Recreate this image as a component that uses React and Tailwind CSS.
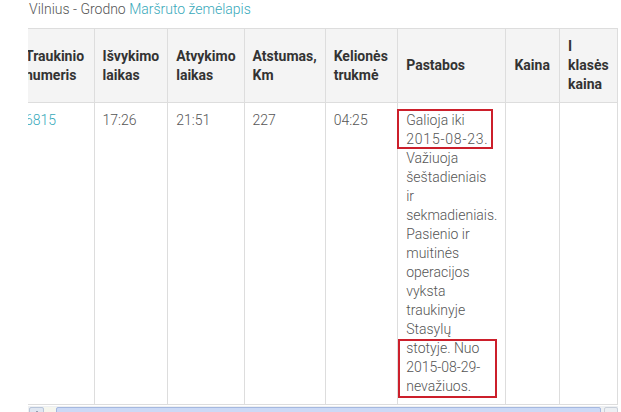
const headers = [
  { label: ['Traukinio', 'numeris'], w: 'w-[78px]' },
  { label: ['Išvykimo', 'laikas'], w: 'w-[73px]' },
  { label: ['Atvykimo', 'laikas'], w: 'w-[76px]' },
  { label: ['Atstumas,', 'Km'], w: 'w-[81px]' },
  { label: ['Kelionės', 'trukmė'], w: 'w-[73px]' },
  { label: ['Pastabos'], w: 'w-[108px]' },
  { label: ['Kaina'], w: 'w-[54px]' },
  { label: ['I', 'klasės', 'kaina'], w: 'w-[58px]' },
];

const notes = [
  'Galioja iki',
  '2015-08-23.',
  'Važiuoja',
  'šeštadieniais',
  'ir',
  'sekmadieniais.',
  'Pasienio ir',
  'muitinės',
  'operacijos',
  'vyksta',
  'traukinyje',
  'Stasylų',
  'stotyje. Nuo',
  '2015-08-29-',
  'nevažiuos.',
];

function Lines({ lines }) {
  return lines.map((l, i) => (
    <span key={i} className={`block whitespace-nowrap ${l === '2015-08-23.' ? 'tracking-[0.8px]' : ''}`}>
      {l}
    </span>
  ));
}

export default function App() {
  return (
    <div className="h-[412px] w-[621px] overflow-hidden bg-white font-['Roboto',sans-serif] text-[14px] leading-[19px] text-[#555]">
      <div className="h-[19px] pl-[29px] font-light">
        Vilnius - Grodno <a className="text-[#38a9ba]">Maršruto žemėlapis</a>
      </div>

      <div className="ml-[28px] mt-[9px] w-[590px] overflow-hidden">
        <table className="-ml-[12px] table-fixed border-collapse">
          <thead>
            <tr className="bg-[#f4f4f4]">
              {headers.map((h, i) => (
                <th
                  key={i}
                  className={`${h.w} border border-[#dddddd] px-[8px] py-[8px] text-left align-middle font-bold text-[#333]`}
                >
                  <Lines lines={h.label} />
                </th>
              ))}
            </tr>
          </thead>
          <tbody>
            <tr className="align-top font-light">
              <td className="border border-[#dddddd] p-[8px] text-[#38a9ba]">6815</td>
              <td className="border border-[#dddddd] p-[8px]">17:26</td>
              <td className="border border-[#dddddd] p-[8px]">21:51</td>
              <td className="border border-[#dddddd] p-[8px]">227</td>
              <td className="border border-[#dddddd] p-[8px]">04:25</td>
              <td className="relative border border-[#dddddd] p-[8px]">
                <Lines lines={notes} />
                <div className="absolute left-[-1px] top-[6px] h-[40px] w-[96px] border-2 border-[#cc1f2b]" />
                <div className="absolute left-[0px] top-[236px] h-[59px] w-[99px] border-2 border-[#cc1f2b]" />
              </td>
              <td className="border border-[#dddddd] p-[8px]"></td>
              <td className="border border-[#dddddd] p-[8px]"></td>
            </tr>
          </tbody>
        </table>
      </div>

      <div className="ml-[28px] mt-[1px] flex h-[17px] w-[590px] items-start bg-[#eef0f2] pt-[1px]">
        <div className="ml-[1px] flex h-[15px] w-[15px] items-start justify-center rounded-[2px] border border-[#b9c6da] bg-[#dfe6f1] pt-[3px]">
          <div className="h-0 w-0 border-x-[3px] border-b-[3px] border-x-transparent border-b-[#4a5a75]" />
        </div>
        <div className="h-[15px] w-[12px] bg-[#f5f6ee]" />
        <div className="h-[15px] flex-1 rounded-[2px] border border-[#a5b8df] bg-[#cbd9f6]" />
        <div className="ml-[3px] h-[15px] w-[14px] rounded-[2px] border border-[#c9d0da] bg-[#eceff3]" />
      </div>
    </div>
  );
}
